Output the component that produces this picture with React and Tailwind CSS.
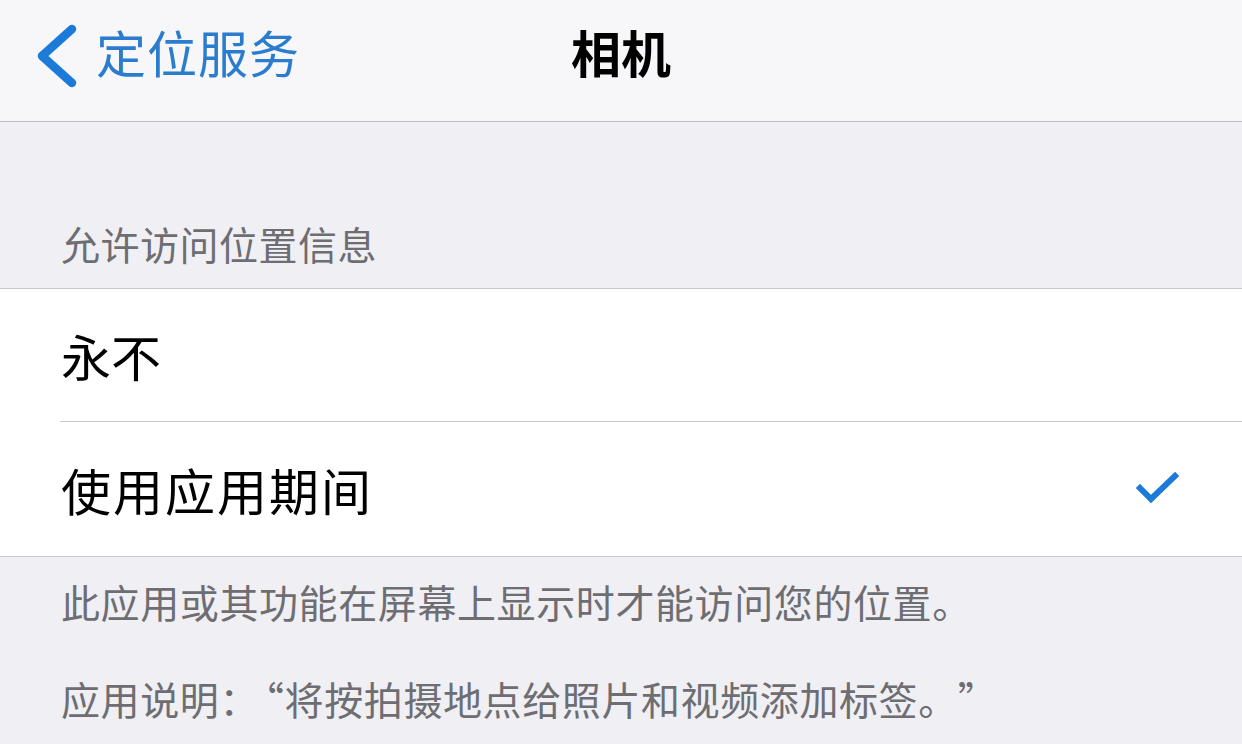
export default function App() {
  const font = { fontFamily: '"Noto Sans CJK SC", "Noto Sans", sans-serif' };
  return (
    <div className="w-[1242px] h-[744px] overflow-hidden bg-[#efeff4] [text-spacing-trim:space-all]" style={font} lang="zh-CN">
      <div className="relative h-[122px] border-b border-[#bdbdc2] bg-[#f7f7f9] flex items-center">
        <div className="flex items-center pl-[34px] gap-[18px] h-full pb-[12px]">
          <svg width="44" height="66" viewBox="0 0 44 66" className="mt-[2px]">
            <path d="M38 6 L8 33 L38 60" fill="none" stroke="#1c7ad8" strokeWidth="8.5" strokeLinecap="round" strokeLinejoin="round" />
          </svg>
          <span className="text-[50px] leading-[50px] tracking-[1px] text-[#2a7ccf] -mt-[8px]">定位服务</span>
        </div>
        <div className="absolute left-0 right-0 top-0 h-full flex items-center justify-center pb-[20px]">
          <span className="text-[50px] leading-[50px] font-bold text-black">相机</span>
        </div>
      </div>
      <div className="h-[166px] flex items-end px-[61px] pb-[26px]">
        <span className="text-[39px] leading-[38px] tracking-[0.5px] text-[#6d6d72]">允许访问位置信息</span>
      </div>
      <div className="bg-white border-y border-[#c8c7cc]">
        <div className="pl-[60px]">
          <div className="h-[133px] border-b border-[#c8c7cc] flex items-center">
            <span className="pl-[1px] text-[50px] leading-[50px] text-black">永不</span>
          </div>
        </div>
        <div className="h-[134px] pl-[61px] pr-[62px] flex items-center justify-between">
          <span className="text-[50px] leading-[50px] tracking-[2px] text-black">使用应用期间</span>
          <svg width="44" height="36" viewBox="0 0 44 36">
            <path d="M4 17 L15 28 L39 5" fill="none" stroke="#1c7ad8" strokeWidth="6" strokeLinecap="square" strokeLinejoin="miter" />
          </svg>
        </div>
      </div>
      <div className="px-[61px] pt-[24px] flex flex-col gap-[57px]">
        <span className="text-[39px] leading-[40px] tracking-[0.6px] text-[#6d6d72] whitespace-nowrap">此应用或其功能在屏幕上显示时才能访问您的位置。</span>
        <span className="text-[39px] leading-[40px] tracking-[0.6px] text-[#6d6d72] whitespace-nowrap">
          应用说明：<span className="ml-[-14px]">“将按拍摄地点给照片和视频添加标签。”</span>
        </span>
      </div>
    </div>
  );
}
